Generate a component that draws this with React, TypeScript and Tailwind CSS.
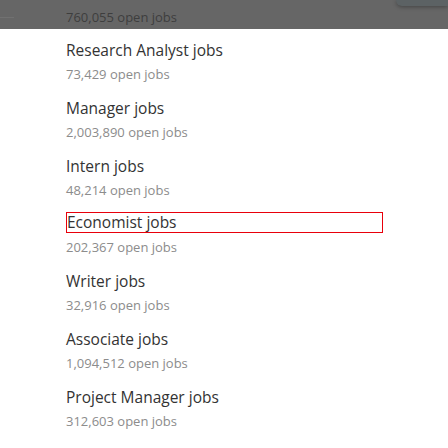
import React from 'react';

type Job = { title: string; count: string };

const jobs: Job[] = [
  { title: 'Research Analyst jobs', count: '73,429' },
  { title: 'Manager jobs', count: '2,003,890' },
  { title: 'Intern jobs', count: '48,214' },
  { title: 'Economist jobs', count: '202,367' },
  { title: 'Writer jobs', count: '32,916' },
  { title: 'Associate jobs', count: '1,094,512' },
  { title: 'Project Manager jobs', count: '312,603' },
];

const font = { fontFamily: '"Open Sans", "Noto Sans", sans-serif' };

const App: React.FC = () => {
  return (
    <div className="w-[448px] h-[448px] bg-white overflow-hidden relative" style={font}>
      {/* dimmed top strip */}
      <div className="h-[29px] bg-[#666666] relative overflow-hidden">
        <div className="absolute left-0 top-[17px] w-[14px] h-px bg-[#717171]" />
        <div className="pl-[66px] pt-[7px] text-[13px] leading-[20px] text-[#3e3e3e]">
          760,055 open jobs
        </div>
        <div className="absolute right-0 top-0 w-[52px] h-[6px] bg-[#5c6264] rounded-bl-[6px] shadow-[0_1px_4px_rgba(0,0,0,0.35)]" />
      </div>

      {/* list */}
      <div className="pl-[66px] pt-[9px] flex flex-col gap-[11.8px]">
        {jobs.map((job) => (
          <div key={job.title} className="flex flex-col">
            {job.title === 'Economist jobs' ? (
              <div className="mt-[1px] mb-[2px] w-[317px] h-[21px] border border-[#e8000b] text-[15.5px] leading-[19px] text-[#333333]">
                {job.title}
              </div>
            ) : (
              <div className="text-[15.5px] leading-[24px] text-[#333333]">{job.title}</div>
            )}
            <div className="mt-[2px] text-[13px] leading-[20px] text-[#8c8c8c]">
              {job.count} open jobs
            </div>
          </div>
        ))}
      </div>
    </div>
  );
};

export default App;
